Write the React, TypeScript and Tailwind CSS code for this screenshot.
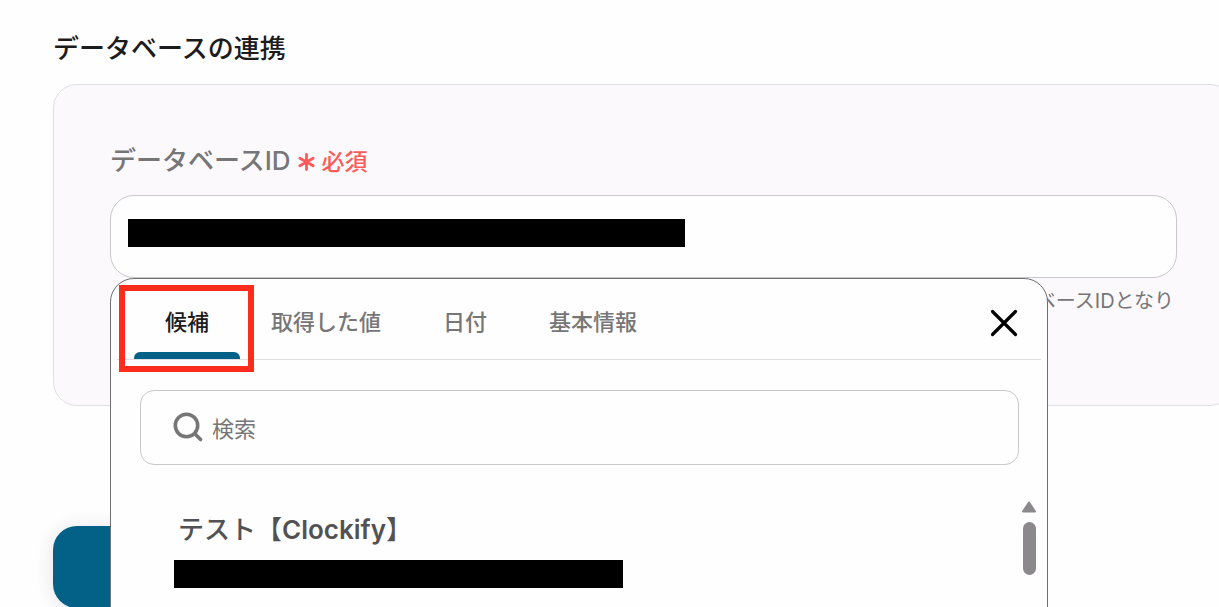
import React, { useState } from "react";

const tabs = ["候補", "取得した値", "日付", "基本情報"];

function CloseIcon() {
  return (
    <svg width="28" height="28" viewBox="0 0 28 28" fill="none" stroke="#000" strokeWidth="3.2" strokeLinecap="round" aria-hidden="true">
      <path d="M2.5 2.5 25.5 25.5M25.5 2.5 2.5 25.5" />
    </svg>
  );
}

function SearchIcon() {
  return (
    <svg width="32" height="32" viewBox="0 0 32 32" fill="none" stroke="#777677" strokeWidth="3.6" strokeLinecap="round" aria-hidden="true">
      <circle cx="14.5" cy="13.5" r="11.2" />
      <path d="M22.8 21.8 28.6 27.6" />
    </svg>
  );
}

function RequiredIcon() {
  return (
    <svg width="18" height="18" viewBox="0 0 18 18" fill="none" stroke="#ff5a5a" strokeWidth="2.8" strokeLinecap="round" aria-hidden="true">
      <path d="M8.5 1.4V16.6M1.9 5.2 15.1 12.8M15.1 5.2 1.9 12.8" />
    </svg>
  );
}

function Tab({ label, active, onSelect }: { label: string; active: boolean; onSelect: () => void }) {
  return (
    <div className="relative flex">
      <button
        type="button"
        role="tab"
        aria-selected={active}
        onClick={onSelect}
        className={`flex flex-col whitespace-nowrap pt-6 text-[22px] leading-[38px] font-medium ${active ? "text-[#1c1b1d]" : "text-[#777677]"}`}
      >
        <span className="px-[31px]">{label}</span>
        {active && <span className="mt-auto h-[7px] w-full rounded-t-md bg-[#036188]" />}
      </button>
      {active && <span className="pointer-events-none absolute top-1.5 -right-3.5 -bottom-[13px] -left-[15px] border-6 border-[#fe2c1c]" />}
    </div>
  );
}

function SuggestionPanel() {
  const [active, setActive] = useState(0);
  return (
    <div className="absolute top-full right-[129px] left-0 z-10 h-[420px] rounded-t-[24px] border border-[#6f6e70] bg-[#fefefe]">
      <div className="mx-1.5 flex h-[81px] items-stretch justify-between border-b border-[#dfdfe1] pr-[23px] pl-[17px]">
        <div role="tablist" className="flex">
          {tabs.map((label, i) => (
            <Tab key={label} label={label} active={i === active} onSelect={() => setActive(i)} />
          ))}
        </div>
        <button type="button" aria-label="閉じる" className="self-center pt-2">
          <CloseIcon />
        </button>
      </div>
      <label className="mr-7 ml-[29px] mt-[30px] flex h-[75px] items-center gap-2 rounded-[14px] border border-[#c9c8ca] pl-[31px]">
        <SearchIcon />
        <input
          type="search"
          aria-label="検索"
          placeholder="検索"
          className="min-w-0 flex-1 bg-transparent pt-0.5 text-[22px] leading-9 outline-none placeholder:text-[#777677]"
        />
      </label>
      <div className="mt-9 flex items-start justify-between pr-[10px] pl-[63px]">
        <button type="button" className="mt-[10px] text-left text-[26px] leading-[38px] font-medium text-[#525153]">
          <span className="block pl-1">
            テスト【<span className="font-semibold">Clockify</span>】
          </span>
          <span className="mt-[11px] block h-7 w-[449px] bg-black" />
        </button>
        <div className="flex flex-col items-center gap-[9px]">
          <svg width="16" height="12" viewBox="0 0 16 12" fill="#8b898c" stroke="#8b898c" strokeWidth="2" strokeLinejoin="round" aria-hidden="true">
            <path d="M8 1.5 14 10.5H2Z" />
          </svg>
          <div className="h-[53px] w-[13px] rounded-full bg-[#8b898c]" />
        </div>
      </div>
    </div>
  );
}

export default function App() {
  return (
    <main className="h-screen overflow-hidden bg-[#fefefe] pt-[29px] pl-[53px] font-[Inter,'Noto_Sans_CJK_JP',sans-serif]" lang="ja">
      <div className="-mr-[15px]">
        <h1 className="text-[26px] leading-10 font-medium text-[#1c1b1d]">データベースの連携</h1>
        <section className="mt-[15px] rounded-[24px] border border-[#dfdfe6] bg-[#fbf9fc] px-14 pt-14 pb-[86px]">
          <div className="flex items-center gap-[7px] leading-10 font-medium">
            <label htmlFor="database-id" className="text-[26px] text-[#777677]">データベースID</label>
            <span className="flex items-center gap-1.5 pt-0.5 text-[23px] leading-9 text-[#ff5a5a]">
              <RequiredIcon />
              必須
            </span>
          </div>
          <div className="relative mt-3.5">
            <div className="flex h-[83px] items-start rounded-[24px] border border-[#c9c8ca] bg-[#fefefe] pt-[23px] pr-4 pl-[17px]">
              <span className="h-7 w-[557px] bg-black" />
              <input id="database-id" type="text" className="h-7 min-w-0 flex-1 bg-transparent pl-2 text-[23px] outline-none" />
            </div>
            <SuggestionPanel />
          </div>
          <p className="mt-[5px] pr-[3px] text-right text-[20px] leading-9 text-[#777677]">データベースIDとなり</p>
        </section>
        <button
          type="button"
          aria-label="保存"
          className="mt-[120px] block h-[82px] w-[220px] rounded-[24px] bg-[#036188] shadow-[0_2px_18px_rgba(60,50,90,0.14)]"
        />
      </div>
    </main>
  );
}
